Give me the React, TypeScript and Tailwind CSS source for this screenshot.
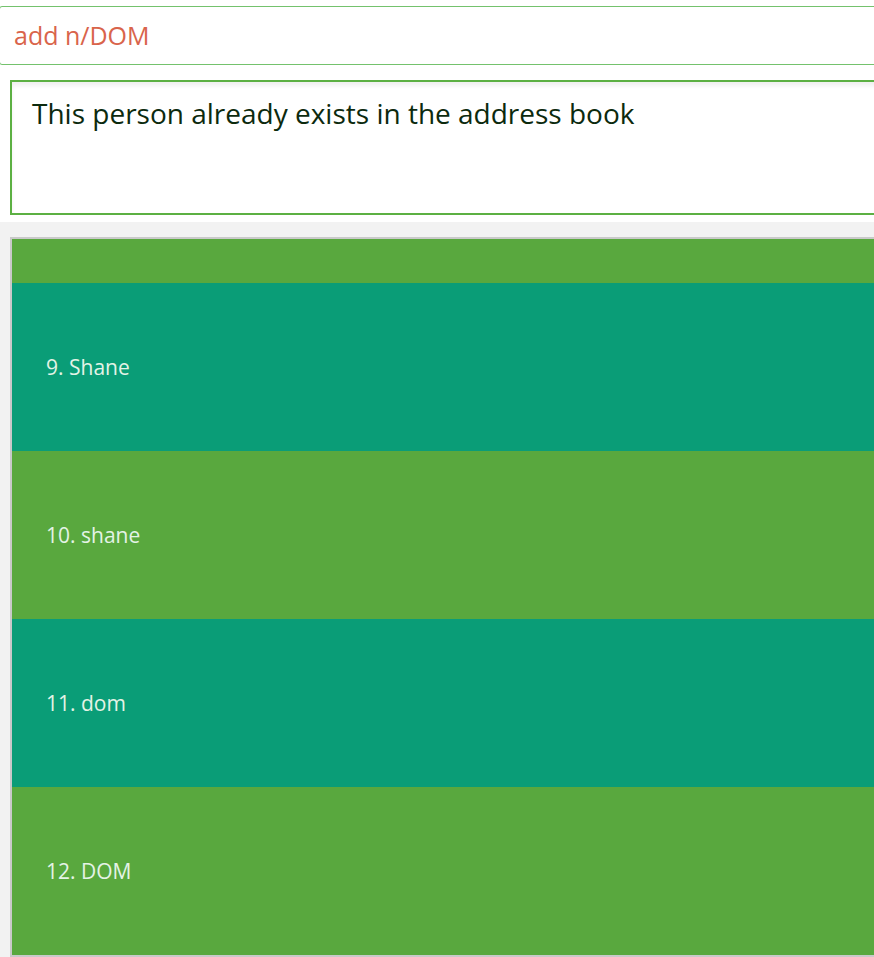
import React from "react";

const people = [
  { id: 9, name: "Shane" },
  { id: 10, name: "shane" },
  { id: 11, name: "dom" },
  { id: 12, name: "DOM" },
];

export default function App() {
  return (
    <div
      className="w-[874px] h-[957px] overflow-hidden bg-[#f2f2f2]"
      style={{ fontFamily: '"Open Sans", "Noto Sans", sans-serif' }}
    >
      {/* command + result */}
      <div className="bg-white h-[222px] pt-[6px] flex flex-col">
        <div className="ml-[-1px] w-[880px] h-[59px] border border-[#74c26d] rounded-[3px] flex items-center pl-[14px] text-[25px] text-[#d9644b]">
          add n/DOM
        </div>
        <div className="mt-[15px] ml-[10px] w-[880px] h-[135px] border-2 border-[#5cb043] shadow-[inset_0_4px_4px_rgba(0,0,0,0.06)] pl-[20px] pt-[10px] text-[28px] text-[#0c2a0e]">
          This person already exists in the address book
        </div>
      </div>

      {/* person list */}
      <div className="mt-[15px] ml-[10px] h-[720px] border-l-2 border-t-2 border-b-2 border-[#c9c9c9] flex flex-col">
        <div className="h-[44px] shrink-0 bg-[#59a83e]" />
        {people.map((p, i) => (
          <div
            key={p.id}
            className={
              "h-[168px] shrink-0 flex items-center pl-[34px] pt-[1px] text-[21px] text-[#e4f3e6] " +
              (i % 2 === 0 ? "bg-[#0a9d77]" : "bg-[#59a83e]")
            }
          >
            {p.id}. {p.name}
          </div>
        ))}
      </div>
    </div>
  );
}
